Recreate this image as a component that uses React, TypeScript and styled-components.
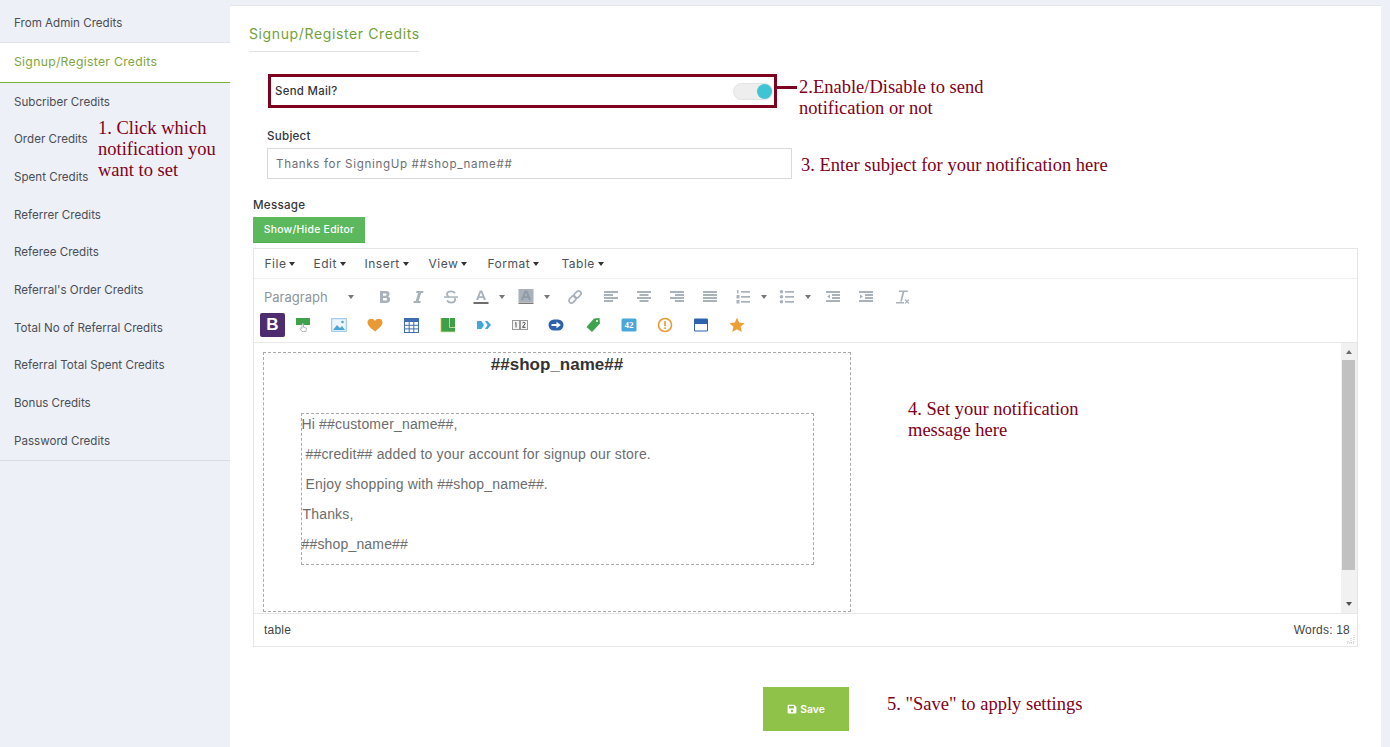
import React from "react";
import styled, { createGlobalStyle } from "styled-components";
import { FaSave } from "react-icons/fa";

const Global = createGlobalStyle`
  html, body { margin: 0; padding: 0; height: 747px; overflow: hidden; background: #edf0f6; }
  * { box-sizing: border-box; }
`;
const ui = `Inter, "Noto Sans", sans-serif`;
const arial = `"Liberation Sans", Arial, sans-serif`;

const Page = styled.div`position: relative; width: 1390px; height: 747px; display: flex; align-items: flex-start; overflow: hidden; background: #edf0f6; font-family: ${ui};`;
const Sidebar = styled.nav`width: 230px; flex: none; padding-top: 4px; display: flex; flex-direction: column; border-bottom: 1px solid #d9dce0; height: 461px;`;
const NavItem = styled.div<{ $active?: boolean }>`
  height: ${p => (p.$active ? "41px" : "37.7px")};
  flex: none; display: flex; align-items: center; padding-left: 14px;
  font-size: 11.6px; white-space: nowrap;
  color: ${p => (p.$active ? "#7fa63f" : "#4a4e57")};
  background: ${p => (p.$active ? "#fff" : "transparent")};
  border-top: ${p => (p.$active ? "1px solid #dfe2e6" : "0")};
  border-bottom: ${p => (p.$active ? "1px solid #7cb032" : "0")};
  ${p => (p.$active ? "font-size: 12.2px; letter-spacing: .3px; padding-bottom: 2px;" : "")}
`;
const Main = styled.main`width: 1151px; height: 742px; margin-top: 5px; background: #fff; border-top: 1px solid #e4e6ea; padding: 18px 23px 0 19px; display: flex; flex-direction: column; align-items: flex-start;`;
const Title = styled.h2`margin: 0; font-weight: 400; font-size: 14px; letter-spacing: .62px; line-height: 20px; height: 28px; width: 170px; color: #74a03a; border-bottom: 1px solid #dfe2e5; white-space: nowrap;`;
const MailRow = styled.div`margin: 22px 0 0 19px; width: 509px; height: 34px; border: 3px solid #800020; display: flex; align-items: center; justify-content: space-between; padding: 0 1px 0 4px;`;
const RowLabel = styled.span`font-size: 11.4px; letter-spacing: .3px; font-weight: 500; color: #33363c;`;
const Track = styled.span`position: relative; display: block; width: 40px; height: 17px; border-radius: 9px; background: #eee; border: 1px solid #e3e3e3;`;
const Knob = styled.span`position: absolute; right: 0; top: 0; width: 15px; height: 15px; border-radius: 50%; background: #3fc4d4;`;
const SubjectLabel = styled.label`display: block; margin: 21px 0 0 18px; font-size: 11.6px; letter-spacing: .25px; line-height: 14px; font-weight: 500; color: #33363c;`;
const SubjectInput = styled.div`margin: 5px 0 0 18px; width: 525px; height: 31px; border: 1px solid #d9d9d9; display: flex; align-items: center; padding-left: 8px; font-size: 11.6px; letter-spacing: .65px; color: #6b6e75;`;
const MessageLabel = styled.label`display: block; margin: 19px 0 0 4px; font-size: 11.6px; letter-spacing: .25px; line-height: 14px; font-weight: 500; color: #33363c;`;
const ToggleEditor = styled.button`margin: 5px 0 0 4px; width: 112px; height: 26px; background: #5cb85c; border: 0; border-bottom: 1px solid #4cae4c; color: #fff; font: 500 10.4px ${ui}; letter-spacing: .27px; padding: 0;`;
const Editor = styled.section`margin: 5px 0 0 4px; width: 1105px; height: 399px; border: 1px solid #e6e6e6; display: flex; flex-direction: column;`;
const MenuBar = styled.div`height: 30px; margin-bottom: 1px; flex: none; border-bottom: 1px solid #eee; display: flex; align-items: center; padding-left: 10.5px;`;
const MenuItem = styled.span<{ $w: number }>`width: ${p => p.$w}px; flex: none; font-size: 12px; letter-spacing: .5px; color: #4c5258; display: inline-flex; align-items: center; gap: 3px; white-space: nowrap;`;
const Caret = styled.i<{ $c?: string }>`display: inline-block; width: 0; height: 0; border-left: 3.5px solid transparent; border-right: 3.5px solid transparent; border-top: 4px solid ${p => p.$c || "#333"};`;
const Toolbar = styled.div`height: 63px; flex: none; border-bottom: 1px solid #e8e8e8; display: flex; flex-direction: column;`;
const ToolRow = styled.div`height: 29px; margin-top: 2px; display: flex; align-items: center;`;
const IconRow = styled.div`height: 28px; display: flex; align-items: center; padding-left: 6px;`;
const ParagraphBox = styled.span`width: 110px; flex: none; padding-left: 10px; font-size: 13px; color: #8d959d; display: flex; align-items: center; justify-content: space-between; padding-right: 10px;`;
const Slot = styled.span<{ $w: number; $ml?: number }>`width: ${p => p.$w}px; margin-left: ${p => p.$ml || 0}px; flex: none; display: flex; align-items: center; justify-content: center; gap: 10px;`;
const PluginSlot = styled.span`width: 36.2px; flex: none; height: 24px; display: flex; align-items: center; justify-content: center;`;
const BootBadge = styled.span`width: 25px; height: 24px; background: #4d2c6f; border-radius: 2px; flex: none; color: #fff; font: 700 17px ${arial}; display: flex; align-items: center; justify-content: center;`;
const Body = styled.div`flex: 1; display: flex; min-height: 0;`;
const Content = styled.div`flex: 1; padding: 9px 0 0 9px; min-width: 0;`;
const OuterTable = styled.div`width: 588px; height: 260px; border: 1px dashed #aaa; display: flex; flex-direction: column; align-items: center;`;
const ShopName = styled.div`font: 700 17px/24px ${arial}; color: #333; margin-bottom: 36px;`;
const InnerTable = styled.div`width: 513px; height: 152px; border: 1px dashed #aaa; display: flex; flex-direction: column;`;
const Line = styled.div<{ $i?: number }>`height: 30px; font: 14px/21px ${arial}; letter-spacing: .17px; color: #6d6d6d; text-indent: ${p => p.$i || 0}px; white-space: pre;`;
const Scroll = styled.div`width: 16px; flex: none; background: #f1f1f1; display: flex; flex-direction: column; align-items: center; justify-content: space-between; padding: 6px 0; position: relative;`;
const Thumb = styled.div`position: absolute; left: 1px; right: 2px; top: 17px; height: 210px; background: #c1c1c1;`;
const ArrowUp = styled.i`width: 0; height: 0; border-left: 3.5px solid transparent; border-right: 3.5px solid transparent; border-bottom: 4px solid #6b6b6b; margin-top: 1px;`;
const ArrowDown = styled.i`width: 0; height: 0; border-left: 3.5px solid transparent; border-right: 3.5px solid transparent; border-top: 4px solid #505050; margin-bottom: 1px;`;
const Status = styled.div`height: 33px; flex: none; border-top: 1px solid #e8e8e8; display: flex; align-items: center; justify-content: space-between; padding: 0 7px 0 10px; font: 12px ${arial}; letter-spacing: .2px; color: #444; position: relative;`;
const Grip = styled.svg`position: absolute; right: 2px; bottom: 2px;`;
const SaveWrap = styled.div`align-self: stretch; display: flex; justify-content: flex-start; padding-left: 514px; margin-top: 40px;`;
const SaveButton = styled.button`width: 86px; height: 44px; background: #8fc249; border: 0; color: #fff; font: 600 10.4px ${ui}; display: flex; align-items: center; justify-content: center; gap: 3px; padding: 0;`;
const Note = styled.div<{ $x: number; $y: number }>`position: absolute; left: ${p => p.$x}px; top: ${p => p.$y}px; font: 18.5px/21px "Liberation Serif", "Times New Roman", serif; color: #800020; white-space: pre;`;
const Connector = styled.div`position: absolute; left: 777px; top: 86px; width: 20px; height: 3px; background: #800020;`;

const G = "#a9b2bb";
const Ic: React.FC<{ children: React.ReactNode; w?: number; h?: number }> = ({ children, w = 16, h = 16 }) => (
  <svg width={w} height={h} viewBox={`0 0 ${w} ${h}`}>{children}</svg>
);
const Bars: React.FC<{ rows: [number, number][] }> = ({ rows }) => (
  <Ic>{rows.map(([x, w], i) => <rect key={i} x={x} y={2 + i * 3} width={w} height={2} fill={G} />)}</Ic>
);
const toolIcons = {
  bold: <Ic><path d="M3 2h6c2.4 0 3.6 1.2 3.6 3 0 1.2-.6 2.1-1.6 2.6 1.4.4 2.2 1.5 2.2 2.9 0 2.2-1.6 3.5-4 3.5H3zM6 4.4v2.3h2.4c.8 0 1.2-.5 1.2-1.2s-.4-1.1-1.2-1.1zM6 9v2.6h2.7c.9 0 1.4-.5 1.4-1.3S9.600 9 8.700 9z" fill={G} fillRule="evenodd" /></Ic>,
  italic: <Ic><path d="M6.500 2h7l-.4 2h-2L8.700 12h2l-.4 2h-7l.4-2h2L8.100 4h-2z" fill={G} /></Ic>,
  strike: <Ic><path d="M12 4.300C11.200 3 9.800 2.400 8 2.400c-2.300 0-4 1-4 2.900 0 1.300.8 2 2 2.500M4 11.500c.8 1.400 2.300 2.100 4.200 2.100 2.300 0 3.900-1.100 3.900-3 0-.7-.2-1.200-.5-1.600" fill="none" stroke={G} strokeWidth="1.800" /><rect x="1" y="7.300" width="14" height="1.500" fill={G} /></Ic>,
  fore: <Ic><path d="M6.800 1.500h2.400L13 11h-2.200l-.7-2H5.900l-.7 2H3zM6.500 7.200h3L8 3.400z" fill={G} fillRule="evenodd" /><rect x="0.500" y="13" width="15" height="2" fill="#6e6e6e" /></Ic>,
  back: <Ic><rect x="0.500" y="0" width="15" height="13" fill={G} /><path d="M6.800 1.500h2.400L13 11h-2.200l-.7-2H5.900l-.7 2H3zM6.500 7.200h3L8 3.400z" fill="#8f9aa6" fillRule="evenodd" /><rect x="0.500" y="13.500" width="15" height="1.500" fill="#7a7a7a" /></Ic>,
  link: <Ic><g fill="none" stroke={G} strokeWidth="1.700" transform="rotate(-45 8 8)"><rect x="0.500" y="5.500" width="8" height="5" rx="2.500" /><rect x="7.500" y="5.500" width="8" height="5" rx="2.500" /></g></Ic>,
  left: <Bars rows={[[1, 14], [1, 9], [1, 14], [1, 9]]} />,
  center: <Bars rows={[[1, 14], [3.500, 9], [1, 14], [3.500, 9]]} />,
  right: <Bars rows={[[1, 14], [6, 9], [1, 14], [6, 9]]} />,
  justify: <Bars rows={[[1, 14], [1, 14], [1, 14], [1, 14]]} />,
  num: <Ic><g fill={G}><rect x="6" y="2" width="9" height="1.700" /><rect x="6" y="7" width="9" height="1.700" /><rect x="6" y="12" width="9" height="1.700" /><rect x="2" y="1" width="1.500" height="3.500" /><rect x="1.500" y="6" width="3" height="3.500" /><rect x="1.500" y="11" width="3" height="3.500" /></g></Ic>,
  bul: <Ic><g fill={G}><rect x="6" y="2" width="9" height="1.700" /><rect x="6" y="7" width="9" height="1.700" /><rect x="6" y="12" width="9" height="1.700" /><circle cx="2.500" cy="2.800" r="1.800" /><circle cx="2.500" cy="7.800" r="1.800" /><circle cx="2.500" cy="12.800" r="1.800" /></g></Ic>,
  outdent: <Ic><g fill={G}><rect x="1" y="2" width="14" height="2" /><rect x="7" y="5" width="8" height="2" /><rect x="7" y="8" width="8" height="2" /><rect x="1" y="11" width="14" height="2" /><path d="M5 5.500v4L2 7.500z" /></g></Ic>,
  indent: <Ic><g fill={G}><rect x="1" y="2" width="14" height="2" /><rect x="7" y="5" width="8" height="2" /><rect x="7" y="8" width="8" height="2" /><rect x="1" y="11" width="14" height="2" /><path d="M2 5.500v4l3-2z" /></g></Ic>,
  clear: <Ic><path d="M5 1.500h9l-.3 1.500h-3.400L8 12.500H6.200L8.500 3H5z" fill={G} /><rect x="2" y="13" width="8" height="1.500" fill={G} /><path d="M11 10.500l4 4M15 10.500l-4 4" stroke={G} strokeWidth="1.200" /></Ic>,
};
const plugins = [
  <Ic><rect x="1" y="1" width="14" height="7" fill="#3fa34d" /><path d="M7 6.500v5l-1.200-.8L5 11.500l2 3h4l.5-3.500-3-.8V6.500z" fill="#fff" stroke="#8a8a8a" strokeWidth=".6" /></Ic>,
  <Ic><rect x=".7" y="1.700" width="14.600" height="12.600" fill="#eef6fb" stroke="#8cc4e4" /><path d="M2 13l4-5 3 3 2-2 3 4z" fill="#4ea6d8" /><circle cx="11.500" cy="5" r="1.300" fill="#4ea6d8" /></Ic>,
  <Ic><path d="M8 14.500C2 10 .5 7.600.5 5.300.5 3.100 2.300 1.700 4.100 1.700c1.700 0 3 .9 3.900 2.200.9-1.300 2.200-2.200 3.900-2.200 1.800 0 3.600 1.400 3.600 3.600 0 2.300-1.500 4.700-7.500 9.200z" fill="#e89a34" /></Ic>,
  <Ic w={15} h={15}><rect x=".5" y=".5" width="14" height="14" fill="#fff" stroke="#3f6fb0" /><rect x=".5" y=".5" width="14" height="3.500" fill="#3f6fb0" /><path d="M5.200 4v10.500M9.800 4v10.500M.5 7.300h14M.5 10.900h14" stroke="#3f6fb0" /></Ic>,
  <Ic><rect x="1" y="1" width="14" height="14" fill="#3f9e4a" /><path d="M9.500 1v9.500M9.500 10.500H15M1 15h14" stroke="#dfe6a0" strokeWidth=".8" /><path d="M.9 1v14" stroke="#e8c95a" strokeWidth=".8" /></Ic>,
  <Ic><path d="M1 4h4.500L8 8l-2.500 4H1z" fill="#3fa9d6" /><path d="M9 4h2.500L15 8l-3.500 4H9l2.500-4z" fill="#3fa9d6" /></Ic>,
  <Ic><rect x=".5" y="3.500" width="7" height="9" fill="#f5f5f5" stroke="#999" /><rect x="8.500" y="3.500" width="7" height="9" fill="#f5f5f5" stroke="#999" /><path d="M4 5.500v5M3 6.300l1-.8" stroke="#555" /><path d="M10.500 6c1-1.100 3-.6 2.500.8L10.500 10.300H13.500" stroke="#444" fill="none" /></Ic>,
  <Ic><rect x=".5" y="2.500" width="15" height="11" rx="5.500" fill="#2f62ad" /><path d="M3.500 7h5V4.700L12.800 8l-4.300 3.300V9h-5z" fill="#fff" /></Ic>,
  <Ic><path d="M9 1.500l5.500-.5.500 5.500L7 15 1.500 10z" fill="#3fa34d" /><circle cx="12" cy="4" r="1" fill="#fff" /></Ic>,
  <Ic><rect x=".5" y="1.500" width="15" height="13" rx="1.500" fill="#4aa7d9" /><text x="8" y="11" textAnchor="middle" fontFamily="Liberation Serif" fontWeight="700" fontSize="9" fill="#fff">42</text></Ic>,
  <Ic><circle cx="8" cy="8" r="6.500" fill="#fff" stroke="#e89a34" strokeWidth="1.600" /><rect x="7.200" y="4" width="1.600" height="5.200" fill="#e89a34" /><rect x="7.200" y="10.300" width="1.600" height="1.700" fill="#e89a34" /></Ic>,
  <Ic><rect x="1" y="1.500" width="14" height="13" rx="1.200" fill="#2f62ad" /><rect x="2" y="7" width="12" height="6.500" fill="#fff" /></Ic>,
  <Ic><path d="M8 .8l2.200 4.800 5.300.6-3.900 3.500 1.100 5.200L8 12.300l-4.700 2.600 1.100-5.200L.5 6.200l5.300-.6z" fill="#ee9f33" /></Ic>,
];
const nav = ["From Admin Credits", "Signup/Register Credits", "Subcriber Credits", "Order Credits", "Spent Credits", "Referrer Credits", "Referee Credits", "Referral's Order Credits", "Total No of Referral Credits", "Referral Total Spent Credits", "Bonus Credits", "Password Credits"];
const menus: [string, number][] = [["File", 49], ["Edit", 51], ["Insert", 64], ["View", 59], ["Format", 74], ["Table", 60]];

export default function App() {
  return (
    <Page>
      <Global />
      <Sidebar>
        {nav.map((n, i) => <NavItem key={n} $active={i === 1}>{n}</NavItem>)}
      </Sidebar>
      <Main>
        <Title>Signup/Register Credits</Title>
        <MailRow>
          <RowLabel>Send Mail?</RowLabel>
          <Track><Knob /></Track>
        </MailRow>
        <SubjectLabel>Subject</SubjectLabel>
        <SubjectInput>Thanks for SigningUp ##shop_name##</SubjectInput>
        <MessageLabel>Message</MessageLabel>
        <ToggleEditor>Show/Hide Editor</ToggleEditor>
        <Editor>
          <MenuBar>
            {menus.map(([m, w]) => <MenuItem key={m} $w={w}>{m}<Caret /></MenuItem>)}
          </MenuBar>
          <Toolbar>
            <ToolRow>
              <ParagraphBox>Paragraph<Caret $c="#777" /></ParagraphBox>
              <Slot $w={33} $ml={4}>{toolIcons.bold}</Slot>
              <Slot $w={33}>{toolIcons.italic}</Slot>
              <Slot $w={33}>{toolIcons.strike}</Slot>
              <Slot $w={43}>{toolIcons.fore}<Caret $c="#777" /></Slot>
              <Slot $w={43} $ml={2}>{toolIcons.back}<Caret $c="#777" /></Slot>
              <Slot $w={33} $ml={3}>{toolIcons.link}</Slot>
              <Slot $w={33} $ml={3}>{toolIcons.left}</Slot>
              <Slot $w={33}>{toolIcons.center}</Slot>
              <Slot $w={33}>{toolIcons.right}</Slot>
              <Slot $w={33}>{toolIcons.justify}</Slot>
              <Slot $w={44} $ml={3}>{toolIcons.num}<Caret $c="#777" /></Slot>
              <Slot $w={44}>{toolIcons.bul}<Caret $c="#777" /></Slot>
              <Slot $w={33} $ml={-1}>{toolIcons.outdent}</Slot>
              <Slot $w={33}>{toolIcons.indent}</Slot>
              <Slot $w={33} $ml={3}>{toolIcons.clear}</Slot>
            </ToolRow>
            <IconRow>
              <BootBadge>B</BootBadge>
              {plugins.map((p, i) => <PluginSlot key={i}>{p}</PluginSlot>)}
            </IconRow>
          </Toolbar>
          <Body>
            <Content>
              <OuterTable>
                <ShopName>##shop_name##</ShopName>
                <InnerTable>
                  <Line>Hi ##customer_name##,</Line>
                  <Line $i={4}>##credit## added to your account for signup our store.</Line>
                  <Line $i={4}>Enjoy shopping with ##shop_name##.</Line>
                  <Line $i={1}>Thanks,</Line>
                  <Line>##shop_name##</Line>
                </InnerTable>
              </OuterTable>
            </Content>
            <Scroll>
              <Thumb />
              <ArrowUp />
              <ArrowDown />
            </Scroll>
          </Body>
          <Status>
            <span>table</span>
            <span>Words: 18</span>
            <Grip width="10" height="10" viewBox="0 0 10 10">
              <path d="M9 1v8H1M6 4v5M3 7v2" stroke="#bbb" strokeDasharray="1 1" fill="none" />
            </Grip>
          </Status>
        </Editor>
        <SaveWrap>
          <SaveButton><FaSave size={10} />Save</SaveButton>
        </SaveWrap>
      </Main>
      <Connector />
      <Note $x={98} $y={118}>{"1. Click which\nnotification you\nwant to set"}</Note>
      <Note $x={799} $y={77}>{"2.Enable/Disable to send\nnotification or not"}</Note>
      <Note $x={801} $y={155}>3. Enter subject for your notification here</Note>
      <Note $x={908} $y={399}>{"4. Set your notification\nmessage here"}</Note>
      <Note $x={887} $y={694}>5. "Save" to apply settings</Note>
    </Page>
  );
}
